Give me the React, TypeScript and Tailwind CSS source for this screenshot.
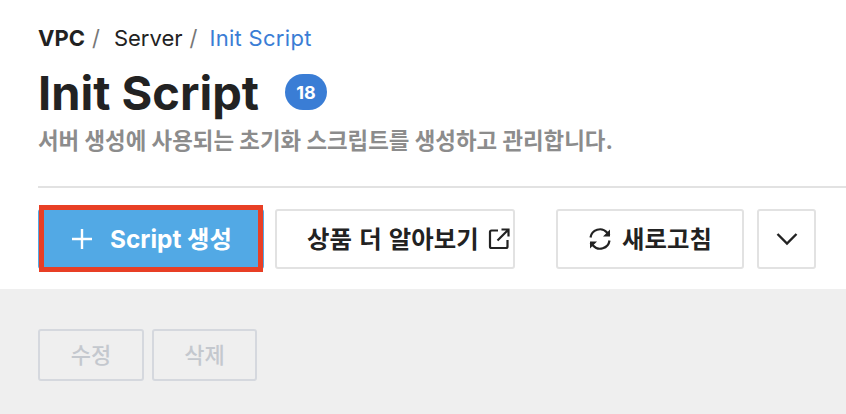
import React from 'react';

const sans = "font-['Inter','Noto_Sans_CJK_KR',sans-serif]";

function OutlineButton({ className = '', children }: { className?: string; children: React.ReactNode }) {
  return (
    <button
      type="button"
      className={`flex h-[60px] items-center justify-center rounded-[3px] border-2 border-[#e2e2e2] bg-white text-[24.4px] font-bold text-[#222222] ${className}`}
    >
      {children}
    </button>
  );
}

function DisabledButton({ label, className = '' }: { label: string; className?: string }) {
  return (
    <button
      type="button"
      className={`flex h-[52px] items-center justify-center rounded-[3px] border-2 border-[#d5d8de] text-[22px] font-medium text-[#c4c8ce] ${className}`}
    >
      {label}
    </button>
  );
}

export default function App() {
  return (
    <div className={`h-[414px] w-[846px] overflow-hidden bg-white ${sans}`}>
      <div className="pt-[22px] pl-[38px]">
        {/* Breadcrumb */}
        <div className="flex h-[32px] items-center text-[22px] text-[#222222]">
          <span className="font-bold">VPC</span>
          <span className="ml-[7px] text-[#777777]">/</span>
          <span className="ml-[14px]">Server</span>
          <span className="ml-[7px] text-[#777777]">/</span>
          <span className="ml-[12px] tracking-[0.3px] text-[#3a7dd5]">Init Script</span>
        </div>

        <div className="mt-[6px] flex h-[64px] items-center">
          <h1 className="text-[47px] leading-none font-bold text-[#222222]">Init Script</h1>
          <span className="ml-[26px] flex h-[36px] w-[42px] items-center justify-center rounded-full bg-[#3a7dd5] text-[18px] font-bold text-white">
            18
          </span>
        </div>

        <p className="mt-[1px] text-[22.4px] leading-[32px] font-bold text-[#8c8c8c]">
          서버 생성에 사용되는 초기화 스크립트를 생성하고 관리합니다.
        </p>

        <div className="mt-[29px] h-[2px] w-full bg-[#e2e2e2]" />

        {/* Actions */}
        <div className="mt-[21px] flex">
          <button
            type="button"
            className="relative flex h-[60px] w-[226px] items-center justify-center gap-[17px] rounded-[3px] bg-[#52a9e5] pl-[1px] text-[24.4px] font-bold text-white"
          >
            <svg width="22" height="22" viewBox="0 0 22 22" fill="none" stroke="currentColor" strokeWidth="2.400">
              <path d="M11 1v20M1 11h20" />
            </svg>
            <span>Script 생성</span>
            <span className="absolute top-[-4px] left-[1px] h-[67px] w-[224px] border-[5px] border-[#e83f25]" />
          </button>
          <OutlineButton className="ml-[11px] w-[240px] gap-[9px] pl-[30px] !justify-start">
            <span className="[word-spacing:1.5px]">상품 더 알아보기</span>
            <svg width="22" height="22" viewBox="0 0 22 22" fill="none" stroke="currentColor" strokeWidth="2.200">
              <path d="M10 2.500H3.500a1.500 1.500 0 0 0-1.500 1.500V18.500A1.500 1.500 0 0 0 3.500 20H18a1.500 1.500 0 0 0 1.500-1.500V12" />
              <path d="M9.500 12.500 20 2M13.500 1.500h7v7" />
            </svg>
          </OutlineButton>
          <OutlineButton className="ml-[41px] w-[188px] gap-[10px]">
            <svg width="24" height="24" viewBox="0 0 24 24" fill="none" stroke="currentColor" strokeWidth="2.200">
              <path d="M2.500 10.500A9.500 9.500 0 0 1 19 5.500l2.500 3" />
              <path d="M21.500 13.500A9.500 9.500 0 0 1 5 18.500l-2.500-3" />
              <path d="M22 2.500v7h-7" fill="currentColor" stroke="none" />
              <path d="M2 21.500v-7h7" fill="currentColor" stroke="none" />
            </svg>
            <span>새로고침</span>
          </OutlineButton>
          <OutlineButton className="ml-[13px] w-[59px]">
            <svg width="22" height="14" viewBox="0 0 22 14" fill="none" stroke="currentColor" strokeWidth="2.400">
              <path d="M1.500 2 11 11.500 20.500 2" />
            </svg>
          </OutlineButton>
        </div>
      </div>

      <div className="mt-[20px] flex h-[125px] gap-[8px] bg-[#efefef] px-[38px] pt-[40px]">
        <DisabledButton label="수정" className="w-[106px]" />
        <DisabledButton label="삭제" className="w-[105px]" />
      </div>
    </div>
  );
}
